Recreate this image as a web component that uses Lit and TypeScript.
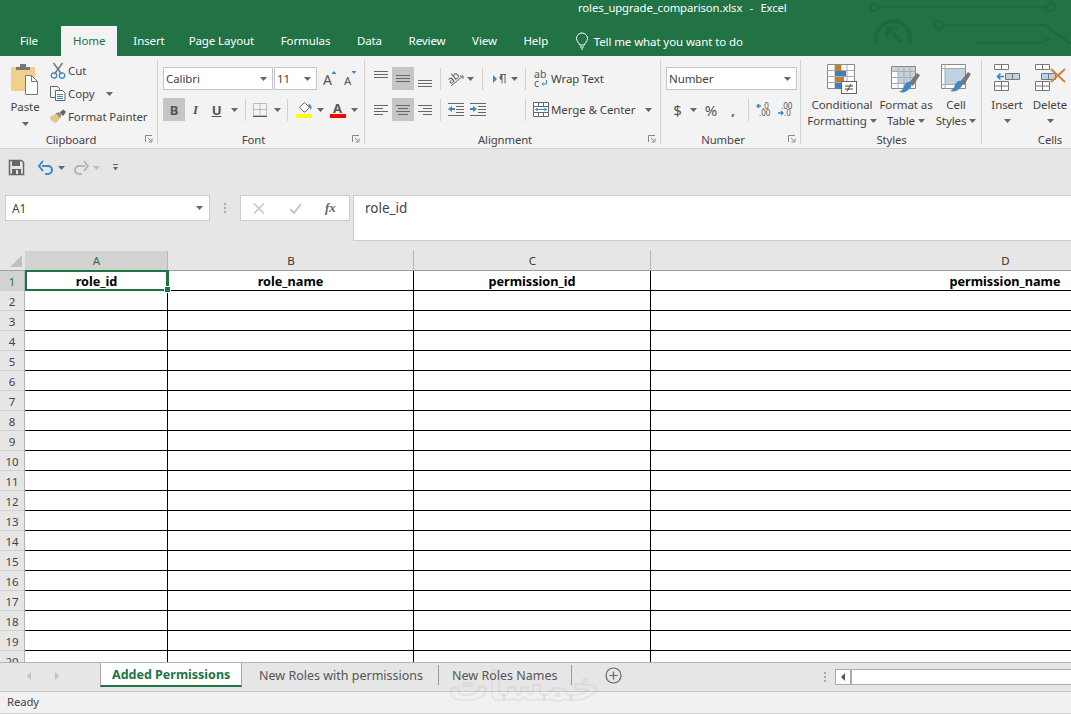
import { LitElement, html, css, svg, nothing } from 'lit';
import { customElement } from 'lit/decorators.js';

const ic = (w: number, h: number, body: unknown) =>
  html`<svg width=${w} height=${h} viewBox="0 0 ${w} ${h}">${body}</svg>`;

const caret = ic(7, 4, svg`<path d="M0 0h7L3.500 4z" fill="#666"/>`);
const sep = html`<span class="sep"></span>`;

const hl = (rows: number[][], color = '#666') =>
  rows.map(([x, y, w]) => svg`<path d="M${x} ${y}.5h${w}" stroke=${color} fill="none"/>`);

const icons = {
  paste: ic(30, 32, svg`
    <rect x="1" y="3" width="24" height="24" rx="1" fill="#f3cf8e"/>
    <path d="M6 6V3h4V0h6v3h4v3z" fill="#777"/>
    <path d="M15.500 11.500h6l6 6v13h-12z" fill="#fff" stroke="#777"/>
    <path d="M21.500 11.500v6h6" fill="none" stroke="#777"/>`),
  cut: ic(15, 16, svg`
    <path d="M3 0l8 11M12 0L4 11" stroke="#777" stroke-width="1.500"/>
    <circle cx="3.500" cy="12.500" r="2.700" fill="none" stroke="#3f87c5" stroke-width="1.300"/>
    <circle cx="11.500" cy="12.500" r="2.700" fill="none" stroke="#3f87c5" stroke-width="1.300"/>`),
  copy: ic(16, 15, svg`
    <path d="M.5 .5h7l2 2v9h-9z" fill="#f3f3f3" stroke="#666"/>
    <path d="M5.500 4.500h7l2.500 2.500v7.500h-9.500z" fill="#fff" stroke="#666"/>
    <path d="M7 8.500h6M7 10.500h6M7 12.500h6" stroke="#3f87c5"/>`),
  painter: ic(17, 15, svg`
    <path d="M0 8l7-4 4 5-5 6-1-2-2 1 0-2-2 0z" fill="#e8c388"/>
    <path d="M6 4l3-1 3 3-1 3z" fill="#888"/>
    <path d="M10 3.500l4-3.500 3 2.500-3 4.500z" fill="#666"/>`),
  growA: ic(14, 15, svg`
    <text x="0" y="14" class="glyph" font-size="14">A</text><path d="M8.500 3l2.500-3 2.500 3z" fill="#3f87c5"/>`),
  shrinkA: ic(13, 15, svg`
    <text x="0" y="14" class="glyph" font-size="11.500">A</text><path d="M7.500 0l2.500 3 2.500-3z" fill="#3f87c5"/>`),
  borders: ic(14, 14, svg`
    <path d="M.5 .5h13v12h-13zM7 .5v12M.5 6.500h13" fill="none" stroke="#888" stroke-dasharray="1 1"/>
    <path d="M0 13.500h14" stroke="#555"/>`),
  fill: ic(16, 17, svg`
    <path d="M3.500 6.500l5-5 5 5-4.500 4.500h-1z" fill="#fff" stroke="#666"/>
    <path d="M12 3c2 0 3.500 1.500 3.500 3.500 0 1-.5 2-1 2-.5-1-1.500-3-2.500-5.500z" fill="#3f87c5"/>
    <rect y="13" width="16" height="4" fill="#ffff00"/>`),
  colorA: ic(16, 17, svg`
    <text x="3" y="12" class="glyph bold" font-size="13">A</text>
    <rect y="13" width="16" height="4" fill="#ff0000"/>`),
  alignTop: ic(14, 16, svg`${hl([[0, 0, 14], [0, 3, 14], [0, 6, 14]])}`),
  alignMid: ic(14, 16, svg`${hl([[0, 4, 14], [0, 7, 14], [0, 10, 14]])}`),
  alignBot: ic(14, 16, svg`${hl([[0, 9, 14], [0, 12, 14], [0, 15, 14]])}`),
  left: ic(14, 10, svg`${hl([[0, 0, 14], [0, 3, 9], [0, 6, 14], [0, 9, 9]])}`),
  center: ic(14, 10, svg`${hl([[0, 0, 14], [2, 3, 10], [0, 6, 14], [2, 9, 10]])}`),
  right: ic(14, 10, svg`${hl([[0, 0, 14], [5, 3, 9], [0, 6, 14], [5, 9, 9]])}`),
  orient: ic(16, 16, svg`
    <text x="0" y="10" class="glyph" font-size="10.500" transform="rotate(-40 6 8)">ab</text>
    <path d="M3 15L15 5M15 5h-3M15 5v3" fill="none" stroke="#666"/>`),
  rtl: ic(13, 10, svg`
    <path d="M0 1l4 4-4 4z" fill="#3f87c5"/>
    <path d="M7 .5h6M9 .5v9M12 .5v9" fill="none" stroke="#666"/><path d="M9 1a2.500 2.500 0 0 0 0 5z" fill="#666"/>`),
  outdent: ic(16, 13, svg`
    ${hl([[0, 0, 16], [8, 3, 8], [8, 6, 8], [8, 9, 8], [0, 12, 16]])}
    <path d="M0 6l4-3v2h3v2H4v2z" fill="#3f87c5"/>`),
  indent: ic(16, 13, svg`
    ${hl([[0, 0, 16], [8, 3, 8], [8, 6, 8], [8, 9, 8], [0, 12, 16]])}
    <path d="M7 6L3 3v2H0v2h3v2z" fill="#3f87c5"/>`),
  wrap: ic(14, 18, svg`
    <text x="0" y="8" class="glyph" font-size="10.500">ab</text>
    <text x="0" y="17" class="glyph" font-size="10.500">c</text>
    <path d="M12.500 10v4H8M9.500 12.500L8 14l1.500 1.500" fill="none" stroke="#3f87c5"/>`),
  merge: ic(16, 15, svg`
    <path d="M.5 .5h15v14H.5zM.5 4.500h15M.5 10.500h15M5.500 .5v4M10.500 .5v4M5.500 10.500v4M10.500 10.500v4" fill="#fff" stroke="#666"/>
    <path d="M2 7.500h12" stroke="#3f87c5"/><path d="M4.500 5.500l-2.500 2 2.500 2zM11.500 5.500l2.500 2-2.500 2z" fill="#3f87c5"/>`),
  incDec: ic(15, 15, svg`
    <text x="6" y="6.500" class="glyph" font-size="8">.0</text>
    <text x="3" y="14" class="glyph" font-size="8">.00</text>
    <path d="M5 4H1M3 2L1 4l2 2" fill="none" stroke="#3f87c5" stroke-width="1.300"/>`),
  decDec: ic(15, 15, svg`
    <text x="3" y="6.500" class="glyph" font-size="8">.00</text>
    <text x="6" y="14" class="glyph" font-size="8">.0</text>
    <path d="M0 11h5M3 9l2 2-2 2" fill="none" stroke="#3f87c5" stroke-width="1.300"/>`),
  condFmt: ic(31, 30, svg`
    <path d="M.5 .5h27v24H.5z" fill="#fff" stroke="#888"/>
    <path d="M8 .5v24M14 .5v24M20 .5v24M.5 6.500h27M.5 12.500h27M.5 18.500h27" stroke="#aaa"/>
    <rect x="8" y="1" width="6" height="6" fill="#c67f2e"/>
    <rect x="8" y="7" width="11" height="5" fill="#3f7fc0"/>
    <rect x="8" y="13" width="9" height="5" fill="#c67f2e"/>
    <rect x="8" y="19" width="6" height="6" fill="#3f7fc0"/>
    <rect x="14.500" y="17.500" width="15" height="12" fill="#fff" stroke="#666"/>
    <path d="M18 22h8M18 25h8M24 20l-4 7.500" fill="none" stroke="#444"/>`),
  fmtTable: ic(30, 29, svg`
    <path d="M.5 2.500h24v22H.5z" fill="#fff" stroke="#888"/>
    <rect x="7" y="7" width="17" height="13" fill="#bdd3e5"/>
    <rect x="1" y="3" width="23" height="4" fill="#d0d0d0"/>
    <path d="M7 2.500v22M13 2.500v22M19 2.500v22M.5 7.500h24M.5 13.500h24M.5 19.500h24" stroke="#aaa"/>
    <path d="M18 19l8-10 3 2-7 11z" fill="#777"/>
    <path d="M19 18c3 3 1 6-2 8-2 2-5 3-9 2 3-1 4-3 5-6 1-3 4-5 6-4z" fill="#3f87c5"/>`),
  cellStyles: ic(30, 29, svg`
    <path d="M.5 .5h24v24H.5z" fill="#fff" stroke="#888"/>
    <rect x="4" y="4" width="20" height="16" fill="#bdd3e5"/>
    <path d="M4 .5v24M.5 4.500h24M.5 20.500h24" stroke="#aaa"/>
    <path d="M19 18l8-10 3 2-7 11z" fill="#777"/>
    <path d="M20 17c3 3 1 6-2 8-2 2-5 3-9 2 3-1 4-3 5-6 1-3 4-5 6-4z" fill="#3f87c5"/>`),
  insert: ic(26, 27, svg`
    <path d="M.5 .5h14v5H.5zM7.500 .5v5M.5 17.500h14v9H.5zM7.500 17.500v9M.5 22h14" fill="#fff" stroke="#777"/>
    <path d="M11.500 9.500h14v6h-14zM18.500 9.500v6" fill="#bdd3e5" stroke="#777"/>
    <path d="M10 12.500H4M6.500 9.500l-3 3 3 3" fill="none" stroke="#2f7fc1" stroke-width="1.500"/>`),
  del: ic(31, 27, svg`
    <path d="M.5 .5h14v5H.5zM7.500 .5v5M.5 17.500h14v9H.5zM7.500 17.500v9M.5 22h14" fill="#fff" stroke="#777"/>
    <path d="M6.500 9.500h14v6h-14zM13.500 9.500v6" fill="#bdd3e5" stroke="#777"/>
    <path d="M16 5l14 13M30 5L16 18" stroke="#d1813c" stroke-width="2"/>`),
  launcher: ic(8, 8, svg`<path d="M.5 7V.5H7" fill="none" stroke="#888"/><path d="M3 3l3 3M7 3.500V7H3.500" fill="none" stroke="#888"/>`),
  bulb: ic(12, 17, svg`<path d="M3.500 12c0-2-3-3.500-3-6.500a5.500 5.500 0 0 1 11 0c0 3-3 4.500-3 6.500zM4 14h4M5 16h2" fill="none" stroke="#fff"/>`),
  save: ic(15, 15, svg`
    <path d="M.5 .5h12l2 2v12H.5z" fill="#e6e6e6" stroke="#666" stroke-width="1.500"/>
    <rect x="3" y="1" width="8" height="5" fill="#666"/><rect x="3" y="9" width="9" height="5" fill="#666"/><rect x="7" y="10" width="2" height="4" fill="#e6e6e6"/>`),
  undo: ic(15, 15, svg`<path d="M4 6h6a4 4 0 0 1 0 8H7" fill="none" stroke="#3f87c5" stroke-width="2"/><path d="M5 1L1 6l4 5" fill="none" stroke="#3f87c5" stroke-width="2"/>`),
  redo: ic(15, 15, svg`<path d="M11 6H5a4 4 0 0 0 0 8h3" fill="none" stroke="#b5b5b5" stroke-width="2"/><path d="M10 1l4 5-4 5" fill="none" stroke="#b5b5b5" stroke-width="2"/>`),
  customize: ic(5, 7, svg`<path d="M0 .5h5" stroke="#666"/><path d="M0 3h5L2.500 6.500z" fill="#666"/>`),
  cross: ic(12, 11, svg`<path d="M1 .5l10 10M11 .5L1 10.500" stroke="#c4c4c4" stroke-width="1.500"/>`),
  check: ic(13, 11, svg`<path d="M1 6l4 4 7-9" fill="none" stroke="#c4c4c4" stroke-width="2"/>`),
  plus: ic(17, 17, svg`<circle cx="8.500" cy="8.500" r="7.500" fill="none" stroke="#666" stroke-width="1.200"/><path d="M8.500 4.500v8M4.500 8.500h8" stroke="#666" stroke-width="1.200"/>`),
};

interface Tool { w: number; c?: unknown; on?: boolean }

const t = (w: number, c?: unknown, on = false): Tool => ({ w, c, on });

const fontRow: Tool[] = [
  t(22, html`<b class="fx">B</b>`, true), t(21, html`<i class="fx serifi">I</i>`),
  t(21, html`<u class="fx bu">U</u>`), t(14, caret), t(8, sep), t(22, icons.borders), t(12, caret), t(9, sep),
  t(24, icons.fill), t(9, caret), t(26, icons.colorA), t(7, caret),
];
const alignTop: Tool[] = [
  t(22, icons.alignTop), t(22, icons.alignMid, true), t(22, icons.alignBot), t(8, sep), t(23, icons.orient),
  t(7, caret), t(16, sep), t(18, icons.rtl), t(12, caret), t(10, sep),
];
const alignBot: Tool[] = [
  t(22, icons.left), t(22, icons.center, true), t(22, icons.right), t(8, sep), t(24, icons.outdent),
  t(20, icons.indent), t(32), t(10, sep),
];
const numRow: Tool[] = [
  t(23, html`<span class="fx big">$</span>`), t(8, caret), t(28, html`<span class="fx big">%</span>`),
  t(16, html`<b class="fx">,</b>`), t(14, sep), t(16, icons.incDec), t(28, icons.decDec),
];

const cols = [
  { k: 'A', w: 143, title: 'role_id' },
  { k: 'B', w: 246, title: 'role_name' },
  { k: 'C', w: 237, title: 'permission_id' },
  { k: 'D', w: 709, title: 'permission_name' },
];
const rowNums = Array.from({ length: 20 }, (_, i) => i + 1);

@customElement('app-root')
export class AppRoot extends LitElement {
  static styles = css`
    :host {
      display: flex;
      flex-direction: column;
      width: 1071px;
      height: 714px;
      overflow: hidden;
      background: #e6e6e6;
      color: #444;
      font: 11.5px 'Noto Sans', sans-serif;
      letter-spacing: -0.1px;
      position: relative;
    }
    svg { display: block; flex: none; overflow: visible; }
    .glyph { fill: #555; font-family: 'Noto Sans', sans-serif; letter-spacing: 0; }
    .glyph.bold { font-weight: 700; }

    .top { background: #217346; height: 56px; color: #fff; position: relative; flex: none; }
    .art { position: absolute; left: 860px; top: 0; overflow: hidden; }
    .title { height: 26px; padding: 0 0 0 578px; line-height: 15px; white-space: pre; word-spacing: 0.8px; position: relative; font-size: 11.3px; }
    .tabs { display: flex; height: 30px; align-items: center; position: relative; padding-left: 8px; }
    .tab { padding: 0 12px; margin-right: 2.6px; line-height: 30px; white-space: nowrap; }
    .tab.file { margin-right: 11px; }
    .tab.home { background: #f3f3f3; color: #217346; margin-right: 4px; }
    .tab.insert { margin-right: 0; }
    .tell { display: flex; align-items: center; gap: 6px; margin-left: 13px; }

    .ribbon { display: flex; height: 92px; background: #f3f3f3; border-bottom: 1px solid #d2d2d2; flex: none; }
    .group { position: relative; display: flex; flex-direction: column; flex: none; }
    .group::after { content: ''; position: absolute; right: 0; top: 4px; bottom: 4px; width: 1px; background: #d0d0d0; }
    .g-clip { width: 158px; }
    .g-font { width: 207px; }
    .g-align { width: 296px; }
    .g-num { width: 140px; }
    .g-styles { width: 181px; }
    .g-cells { width: 136px; }
    .body { height: 76px; display: flex; flex: none; }
    .label { height: 16px; text-align: center; line-height: 16px; font-size: 11.3px; }
    .has-launch .label { padding-right: 16px; }
    .launch { position: absolute; right: 5px; bottom: 5px; }

    .paste { width: 50px; padding-top: 8px; display: flex; flex-direction: column; align-items: center; box-sizing: border-box; }
    .paste span { margin-top: 3px; line-height: 16px; }
    .paste svg:last-child { margin-top: 7px; }
    .clipcol { display: flex; flex-direction: column; padding-top: 3px; }
    .clipitem { display: flex; align-items: center; height: 23px; gap: 2px; white-space: nowrap; }
    .clipitem > svg:first-child { width: 16px; }
    .clipitem .c2 { margin-left: 9px; }

    .stack { display: flex; flex-direction: column; gap: 8px; padding: 11px 0 0 5px; }
    .row { display: flex; height: 23px; align-items: center; }
    .cell { height: 23px; display: flex; align-items: center; justify-content: center; flex: none; }
    .cell.on { background: #c6c6c6; }
    .sep { width: 1px; height: 22px; background: #d0d0d0; display: block; }
    .fx { font-size: 13px; color: #555; font-style: normal; }
    .serifi { font: italic 700 13px 'Liberation Serif', serif; }
    .bu { font-weight: 700; }
    .big { font-size: 15px; }

    .combo { height: 23px; box-sizing: border-box; background: #fff; border: 1px solid #c6c6c6; display: flex; align-items: center; justify-content: space-between; padding: 0 5px 0 2px; }
    .combo.fname { width: 110px; }
    .combo.fsize { width: 43px; margin-left: 1px; }
    .combo.numfmt { width: 131px; }
    .grow { width: 25px; display: flex; justify-content: center; }
    .grow.second { width: 17px; }

    .textbtn { display: flex; align-items: center; white-space: nowrap; gap: 3px; height: 23px; margin-left: 4px; }
    .textbtn.m { gap: 2px; margin-left: 3px; }
    .textbtn .end { margin-left: 8px; }

    .big-btn { display: flex; flex-direction: column; align-items: center; padding-top: 8px; box-sizing: border-box; flex: none; line-height: 16px; white-space: nowrap; }
    .big-btn .iconbox { height: 32px; display: flex; align-items: flex-start; margin-bottom: 1px; }
    .big-btn .ln { display: flex; align-items: center; gap: 3px; }
    .b-cf { width: 82px; }
    .b-ft { width: 56px; margin-left: -5px; }
    .b-cs { width: 44px; }
    .b-ins { width: 50px; }
    .b-del { width: 36px; }
    .undercaret { margin-top: 6px; }

    .qat { height: 36px; flex: none; display: flex; align-items: center; padding: 0 0 0 9px; box-sizing: border-box; }
    .qat svg { margin-top: 1px; }
    .q1 { margin-left: 14px; }
    .q2 { margin-left: 5px; }
    .q3 { margin-left: 9px; }
    .q4 { margin-left: 4px; }
    .q5 { margin-left: 13px; }

    .fbar { display: flex; height: 46px; margin: 10px 0; flex: none; align-items: flex-start; }
    .namebox { margin-left: 5px; width: 205px; height: 26px; box-sizing: border-box; background: #fff; border: 1px solid #ccc; display: flex; align-items: center; justify-content: space-between; padding: 0 6px 0 6px; font-size: 12px; }
    .grip { width: 30px; height: 26px; display: flex; justify-content: center; align-items: center; }
    .grip i { width: 2px; height: 10px; background-image: repeating-linear-gradient(#aaa 0 2px, transparent 2px 4px); display: block; }
    .fbtns { width: 110px; height: 26px; box-sizing: border-box; background: #fff; border: 1px solid #ccc; display: flex; align-items: center; padding-left: 12px; gap: 24px; }
    .fxi { font: italic 700 13px 'Liberation Serif', serif; color: #666; margin-left: -1px; }
    .finput { margin-left: 3px; flex: 1; height: 46px; box-sizing: border-box; background: #fff; border: 1px solid #ccc; border-right: 0; padding: 4px 0 0 11px; line-height: 17px; font-size: 13.5px; letter-spacing: 0; color: #444; }

    .sheet { height: 411px; overflow: hidden; background: #fff; flex: none; letter-spacing: 0; }
    .hrow { display: flex; height: 20px; }
    .corner { width: 25px; height: 19px; background: #e6e6e6; border-bottom: 1px solid #9e9e9e; box-sizing: content-box; flex: none; position: relative; }
    .corner::after { content: ''; position: absolute; right: 3px; bottom: 3px; border-style: solid; border-width: 0 0 12px 12px; border-color: transparent transparent #c0c0c0 transparent; }
    .ch { flex: none; height: 19px; box-sizing: content-box; background: #e6e6e6; border-bottom: 1px solid #9e9e9e; text-align: center; line-height: 19px; position: relative; color: #333; font-size: 11.5px; box-shadow: inset -1px 0 0 #b5b5b5; }
    .ch.sel { background: #d2d2d2; color: #217346; }
    .drow { display: flex; height: 20px; }
    .rh { width: 25px; flex: none; background: #e6e6e6; text-align: center; line-height: 21px; box-shadow: inset -1px 0 0 #b5b5b5, inset 0 -1px 0 #d0d0d0; box-sizing: border-box; padding-right: 1px; color: #444; font-size: 11.5px; }
    .rh.sel { background: #d2d2d2; color: #217346; }
    .dc { flex: none; box-sizing: border-box; border-right: 1px solid #000; border-bottom: 1px solid #000; text-align: center; color: #000; font: 700 12.7px/21px 'Noto Sans', sans-serif; white-space: nowrap; overflow: hidden; position: relative; }
    .dc.active { overflow: visible; border: 0; box-shadow: inset 0 0 0 2px #217346, 1px 0 0 #217346; margin: -1px 0 0 0; height: 21px; z-index: 1; line-height: 23px; }
    .dc.active::after { content: ''; position: absolute; right: -3px; bottom: -2px; width: 5px; height: 5px; background: #217346; border: 1px solid #fff; box-sizing: content-box; }

    .bar { height: 28px; border-top: 1px solid #b4b4b4; border-bottom: 1px solid #c8c8c8; display: flex; align-items: flex-start; flex: none; background: #e6e6e6; box-sizing: content-box; position: relative; letter-spacing: 0; }
    .nav { width: 100px; height: 26px; display: flex; gap: 24px; align-items: center; flex: none; padding-left: 27px; box-sizing: border-box; }
    .sheet-tab { height: 24px; display: flex; align-items: center; white-space: nowrap; font-size: 12.5px; color: #555; flex: none; }
    .sheet-tab.active { width: 142px; box-sizing: border-box; background: #fff; border-left: 1px solid #a8a8a8; border-right: 1px solid #a8a8a8; border-bottom: 2px solid #217346; color: #217346; font-weight: 700; padding: 1px 0 0 11px; }
    .st2 { padding: 0 17px; width: 197px; box-sizing: border-box; border-right: 1px solid #999; height: 20px; margin-top: 2px; }
    .st3 { padding: 0 0 0 13px; width: 133px; box-sizing: border-box; border-right: 1px solid #999; height: 20px; margin-top: 2px; }
    .plus { margin: 4px 0 0 33px; }
    .dots { margin: 9px 0 0 202px; width: 2px; height: 10px; background-image: repeating-linear-gradient(#aaa 0 2px, transparent 2px 4px); flex: none; }
    .hs { margin: 6px 0 0 9px; flex: 1; height: 16px; display: flex; box-sizing: border-box; border: 1px solid #ababab; border-right: 0; background: #fff; }
    .hs b { width: 14px; border-right: 2px solid #ababab; display: flex; align-items: center; justify-content: center; flex: none; }
    .status { height: 22px; background: #f1f1f1; border-bottom: 1px solid #d0d0d0; flex: none; padding-left: 7px; line-height: 19px; font-size: 11.3px; box-sizing: border-box; }
    .foot { flex: 1; background: #fff; }
    .mark { position: absolute; right: 471px; top: 664px; font: 700 40px/44px 'DejaVu Sans', sans-serif; letter-spacing: 0; color: transparent; -webkit-text-stroke: 2px rgba(150, 150, 150, .14); pointer-events: none; }
  `;

  private tools(list: Tool[]) {
    return list.map(
      x => html`<span class="cell ${x.on ? 'on' : ''}" style="width:${x.w}px">${x.c ?? nothing}</span>`
    );
  }

  private topBar() {
    return html`<div class="top">
      <svg class="art" width="211" height="44" viewBox="0 0 211 44">
        <g fill="none" stroke="#1b6a40" stroke-width="2.500">
          <circle cx="14" cy="7" r="4"/><circle cx="191" cy="7" r="4"/><path d="M18 7h169"/>
          <circle cx="79" cy="25" r="4"/><path d="M83 25h102l26 19"/>
          <path d="M116 43h64M180 43l10-5"/>
          <path d="M17 44a17 17 0 1 1 32 0" stroke-width="4"/>
          <path d="M42 42L27 28M27 38V28h10" stroke-width="4"/>
        </g>
      </svg>
      <div class="title">roles_upgrade_comparison.xlsx  -  Excel</div>
      <div class="tabs">
        <span class="tab file">File</span>
        <span class="tab home">Home</span>
        <span class="tab insert">Insert</span>
        ${['Page Layout', 'Formulas', 'Data', 'Review', 'View', 'Help'].map(n => html`<span class="tab">${n}</span>`)}
        <span class="tell">${icons.bulb}Tell me what you want to do</span>
      </div>
    </div>`;
  }

  private ribbon() {
    return html`<div class="ribbon">
      <div class="group g-clip has-launch">
        <div class="body">
          <div class="paste">${icons.paste}<span>Paste</span>${caret}</div>
          <div class="clipcol">
            <div class="clipitem">${icons.cut}<span>Cut</span></div>
            <div class="clipitem">${icons.copy}<span>Copy</span><span class="c2">${caret}</span></div>
            <div class="clipitem">${icons.painter}<span>Format Painter</span></div>
          </div>
        </div>
        <div class="label">Clipboard</div><span class="launch">${icons.launcher}</span>
      </div>
      <div class="group g-font has-launch">
        <div class="body"><div class="stack">
          <div class="row">
            <div class="combo fname"><span>Calibri</span>${caret}</div>
            <div class="combo fsize"><span>11</span>${caret}</div>
            <span class="grow">${icons.growA}</span><span class="grow second">${icons.shrinkA}</span>
          </div>
          <div class="row">${this.tools(fontRow)}</div>
        </div></div>
        <div class="label">Font</div><span class="launch">${icons.launcher}</span>
      </div>
      <div class="group g-align has-launch">
        <div class="body"><div class="stack">
          <div class="row">${this.tools(alignTop)}<span class="textbtn">${icons.wrap}<span>Wrap Text</span></span></div>
          <div class="row">${this.tools(alignBot)}<span class="textbtn m">${icons.merge}<span>Merge &amp; Center</span><span class="end">${caret}</span></span></div>
        </div></div>
        <div class="label">Alignment</div><span class="launch">${icons.launcher}</span>
      </div>
      <div class="group g-num has-launch">
        <div class="body"><div class="stack">
          <div class="row"><div class="combo numfmt"><span>Number</span>${caret}</div></div>
          <div class="row">${this.tools(numRow)}</div>
        </div></div>
        <div class="label">Number</div><span class="launch">${icons.launcher}</span>
      </div>
      <div class="group g-styles">
        <div class="body">
          <div class="big-btn b-cf"><span class="iconbox">${icons.condFmt}</span><span>Conditional</span><span class="ln">Formatting ${caret}</span></div>
          <div class="big-btn b-ft"><span class="iconbox">${icons.fmtTable}</span><span>Format as</span><span class="ln">Table ${caret}</span></div>
          <div class="big-btn b-cs"><span class="iconbox">${icons.cellStyles}</span><span>Cell</span><span class="ln">Styles ${caret}</span></div>
        </div>
        <div class="label">Styles</div>
      </div>
      <div class="group g-cells">
        <div class="body">
          <div class="big-btn b-ins"><span class="iconbox">${icons.insert}</span><span>Insert</span><span class="undercaret">${caret}</span></div>
          <div class="big-btn b-del"><span class="iconbox">${icons.del}</span><span>Delete</span><span class="undercaret">${caret}</span></div>
        </div>
        <div class="label">Cells</div>
      </div>
    </div>`;
  }

  private sheet() {
    return html`<div class="sheet">
      <div class="hrow">
        <div class="corner"></div>
        ${cols.map((c, i) => html`<div class="ch ${i === 0 ? 'sel' : ''}" style="width:${c.w}px">${c.k}</div>`)}
      </div>
      ${rowNums.map(
        n => html`<div class="drow">
          <div class="rh ${n === 1 ? 'sel' : ''}">${n}</div>
          ${cols.map(
            (c, i) => html`<div class="dc ${n === 1 && i === 0 ? 'active' : ''}" style="width:${c.w}px">${n === 1 ? c.title : ''}</div>`
          )}
        </div>`
      )}
    </div>`;
  }

  render() {
    return html`
      ${this.topBar()}
      ${this.ribbon()}
      <div class="qat">
        ${icons.save}<span class="q1">${icons.undo}</span><span class="q2">${caret}</span>
        <span class="q3">${icons.redo}</span><span class="q4">${ic(7, 4, svg`<path d="M0 0h7L3.500 4z" fill="#bbb"/>`)}</span>
        <span class="q5">${icons.customize}</span>
      </div>
      <div class="fbar">
        <div class="namebox"><span>A1</span>${caret}</div>
        <div class="grip"><i></i></div>
        <div class="fbtns">${icons.cross}${icons.check}<span class="fxi">fx</span></div>
        <div class="finput">role_id</div>
      </div>
      ${this.sheet()}
      <div class="bar">
        <div class="nav">
          ${ic(4, 8, svg`<path d="M4 0v8L0 4z" fill="#c0c0c0"/>`)}${ic(4, 8, svg`<path d="M0 0v8l4-4z" fill="#c0c0c0"/>`)}
        </div>
        <div class="sheet-tab active">Added Permissions</div>
        <div class="sheet-tab st2">New Roles with permissions</div>
        <div class="sheet-tab st3">New Roles Names</div>
        <span class="plus">${icons.plus}</span>
        <span class="dots"></span>
        <div class="hs"><b>${ic(4, 8, svg`<path d="M4 0v8L0 4z" fill="#555"/>`)}</b></div>
      </div>
      <div class="status">Ready</div>
      <div class="foot"></div>
      <div class="mark" lang="ar" dir="rtl">خمسات</div>
    `;
  }
}
